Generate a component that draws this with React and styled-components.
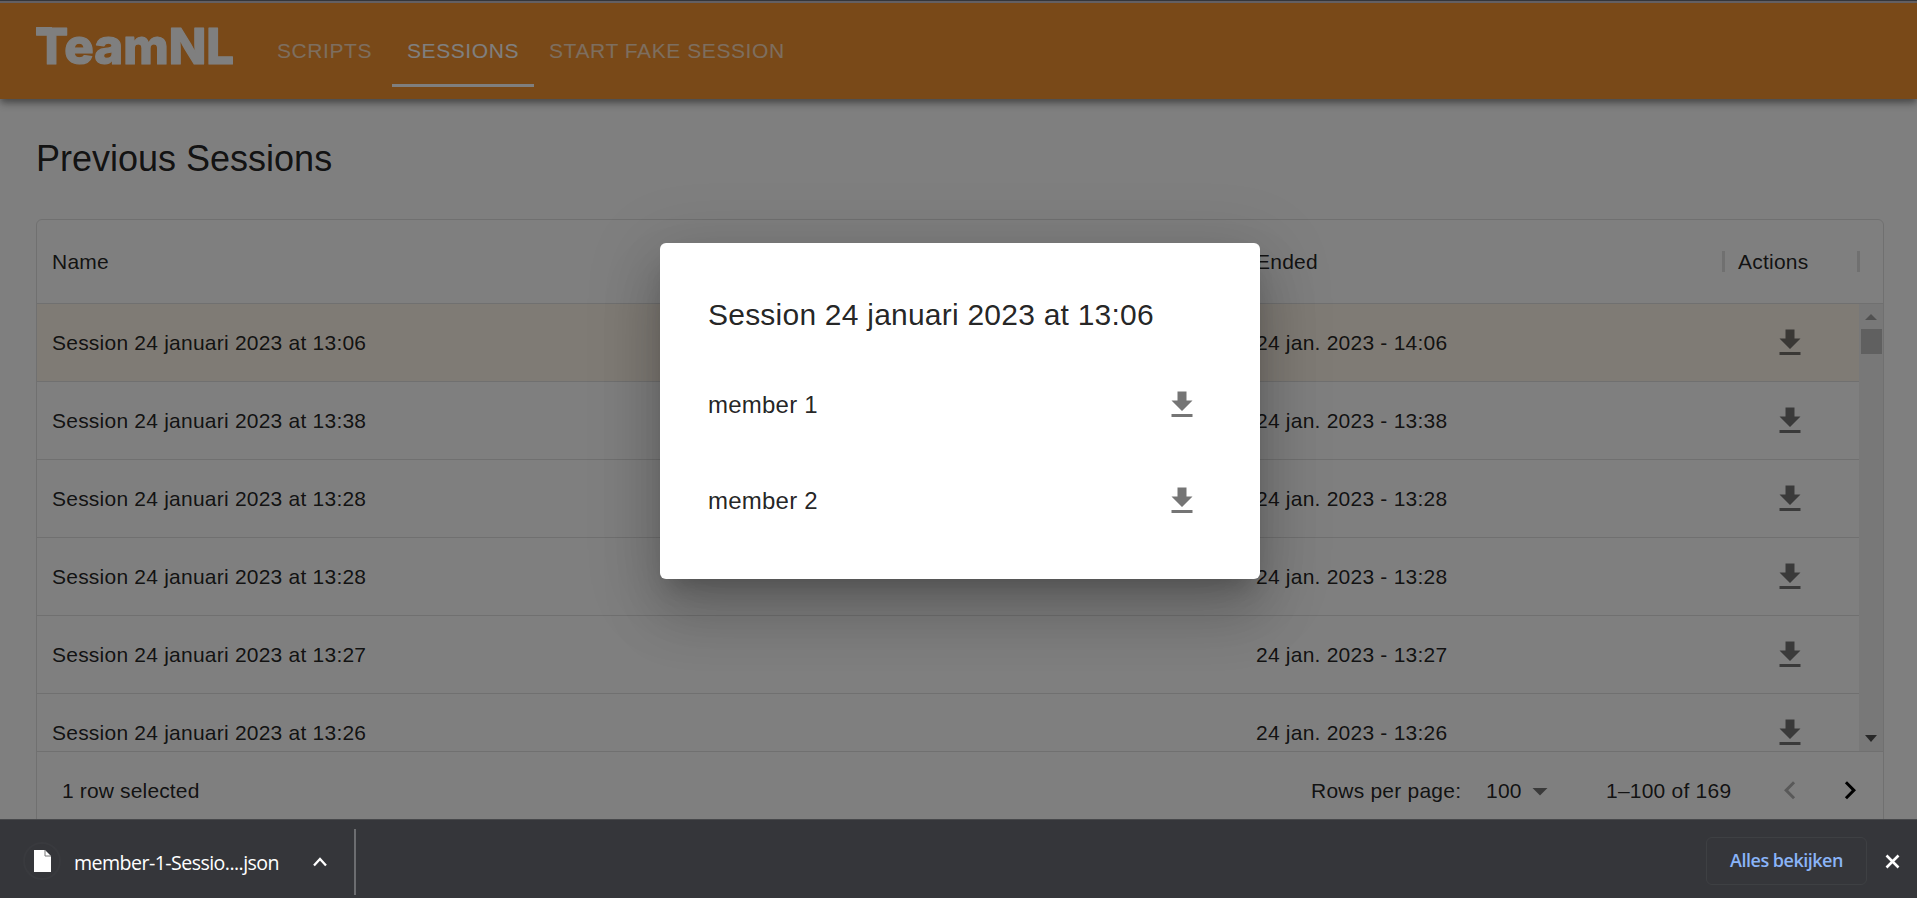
import React from "react";
import styled, { createGlobalStyle } from "styled-components";

const sessions = [
  ["Session 24 januari 2023 at 13:06", "24 jan. 2023 - 14:06"],
  ["Session 24 januari 2023 at 13:38", "24 jan. 2023 - 13:38"],
  ["Session 24 januari 2023 at 13:28", "24 jan. 2023 - 13:28"],
  ["Session 24 januari 2023 at 13:28", "24 jan. 2023 - 13:28"],
  ["Session 24 januari 2023 at 13:27", "24 jan. 2023 - 13:27"],
  ["Session 24 januari 2023 at 13:26", "24 jan. 2023 - 13:26"],
];
const members = ["member 1", "member 2"];

const GlobalStyle = createGlobalStyle`
  * { box-sizing: border-box; }
  body { margin: 0; overflow: hidden; font-family: "Liberation Sans", Arial, sans-serif; }
`;
const Window = styled.div`
  display: flex;
  flex-direction: column;
  width: 1917px;
  height: 898px;
  overflow: hidden;
`;
const BrowserEdge = styled.div`
  flex: none;
  height: 1px;
  background: #35363a;
`;
const Viewport = styled.div`
  position: relative;
  flex: 1;
  min-height: 0;
  overflow: hidden;
  background: #fff;
  color: rgba(0, 0, 0, 0.87);
`;
const AppBar = styled.header`
  display: flex;
  align-items: flex-start;
  height: 98px;
  padding-left: 36px;
  border-top: 2px solid #c6bfc4;
  background: #f39230;
  box-shadow: 0 3px 6px -1.5px rgba(0, 0, 0, 0.2), 0 6px 7.5px rgba(0, 0, 0, 0.14), 0 1.5px 15px rgba(0, 0, 0, 0.12),
    0 3px 6px rgba(0, 0, 0, 0.12);
`;
const Logo = styled.svg`
  flex: none;
  width: 200px;
  height: 72px;
  margin-top: 4px;
  margin-right: 21px;
  overflow: visible;
`;
const Tab = styled.div`
  display: flex;
  align-items: center;
  justify-content: center;
  height: 84px;
  min-width: 135px;
  padding: 14px 15px 0;
  border-bottom: 3px solid ${(p) => (p.$active ? "#fff" : "transparent")};
  color: ${(p) => (p.$active ? "#fff" : "rgba(255,255,255,0.7)")};
  font-size: 21px;
  letter-spacing: 0.58px;
  white-space: nowrap;
`;
const PageTitle = styled.h1`
  margin: 38px 0 0 36px;
  font-size: 36px;
  font-weight: 400;
  line-height: 44px;
`;
const Grid = styled.section`
  display: flex;
  flex-direction: column;
  width: 1848px;
  height: 620px;
  margin: 38px 0 0 36px;
  border: 1px solid #e0e0e0;
  border-radius: 6px;
  font-size: 21px;
  letter-spacing: 0.225px;
`;
const HeadRow = styled.div`
  display: flex;
  flex: none;
  align-items: center;
  height: 84px;
  border-bottom: 1px solid #e0e0e0;
`;
const NameCell = styled.div`
  width: 1204px;
  padding-left: 15px;
`;
const EndedCell = styled.div`
  width: 466px;
  padding-left: 15px;
`;
const ActionsCell = styled.div`
  display: flex;
  width: 152px;
  padding-left: 65px;
`;
const Separator = styled.i`
  width: 3px;
  height: 21px;
  background: #e0e0e0;
`;
const HeadActions = styled.div`
  display: flex;
  align-items: center;
  width: 139px;
  margin-left: 15px;
`;
const HeadLabel = styled.span`
  width: 132px;
  padding-left: 13px;
`;
const Body = styled.div`
  display: flex;
  flex: none;
  height: 448px;
  overflow: hidden;
  border-bottom: 1px solid #e0e0e0;
`;
const Rows = styled.div`
  flex: 1;
`;
const Row = styled.div`
  display: flex;
  align-items: center;
  height: 78px;
  border-bottom: 1px solid #e0e0e0;
  background: ${(p) => (p.$selected ? "#fef6ea" : "transparent")};
`;
const Scrollbar = styled.div`
  display: flex;
  flex-direction: column;
  align-items: center;
  width: 24px;
  padding: 10px 0 9px;
  background: #f1f1f1;
`;
const Thumb = styled.div`
  width: 21px;
  height: 25px;
  margin: 9px 0 auto;
  background: #c1c1c1;
`;
const Footer = styled.footer`
  display: flex;
  align-items: center;
  height: 78px;
  padding-left: 25px;

  > * {
    flex-shrink: 0;
  }
`;
const SelectedCount = styled.span`
  width: 1249px;
  letter-spacing: 0.15px;
`;
const PerPage = styled.span`
  width: 175px;
`;
const PageSize = styled.span`
  display: flex;
  align-items: center;
  width: 120px;
  padding-bottom: 1px;
`;
const Range = styled.span`
  width: 166px;
`;
const PageArrow = styled.svg`
  width: 36px;
  height: 36px;
  margin-right: 24px;
  fill: currentColor;
  color: ${(p) => (p.$disabled ? "rgba(0,0,0,0.3)" : "#000")};
`;
const Caret = styled.svg`
  width: 36px;
  height: 36px;
  fill: rgba(0, 0, 0, 0.54);
`;
const DownloadIcon = styled.svg`
  width: 36px;
  height: 36px;
  fill: rgba(0, 0, 0, 0.54);
`;
const Backdrop = styled.div`
  position: absolute;
  inset: 0;
  display: flex;
  justify-content: center;
  align-items: flex-start;
  padding: 242px 0 0 3px;
  background: rgba(0, 0, 0, 0.5);
`;
const Dialog = styled.div`
  width: 600px;
  height: 336px;
  padding: 48px;
  border-radius: 6px;
  background: #fff;
  box-shadow: 0 16px 22px -10px rgba(0, 0, 0, 0.2), 0 36px 57px 4px rgba(0, 0, 0, 0.14), 0 13px 69px 12px rgba(0, 0, 0, 0.12);
`;
const DialogTitle = styled.h2`
  margin: 0 0 18px;
  font-size: 30px;
  font-weight: 400;
  line-height: 48px;
  letter-spacing: 0.225px;
`;
const Member = styled.div`
  display: flex;
  align-items: center;
  justify-content: space-between;
  height: 96px;
  padding-right: 12px;
  font-size: 24px;
  letter-spacing: 0.225px;
`;
const DownloadBar = styled.div`
  display: flex;
  flex: none;
  align-items: center;
  height: 79px;
  border-top: 1px solid #47484b;
  background: #35363a;
  color: #fff;
  font-family: "Open Sans", "Noto Sans", sans-serif;
`;
const FileRing = styled.div`
  display: flex;
  align-items: center;
  justify-content: center;
  width: 38px;
  height: 38px;
  margin: 4px 13px 0 23px;
  border: 2px solid #393a3e;
  border-radius: 50%;
`;
const FileName = styled.span`
  width: 239px;
  padding-top: 7px;
  font-size: 19.6px;
  letter-spacing: -0.56px;
  white-space: nowrap;
`;
const Chevron = styled.svg`
  width: 14px;
  height: 10px;
  margin-top: 5px;
`;
const BarDivider = styled.i`
  width: 2px;
  height: 66px;
  margin: 5px auto 0 27px;
  background: #6c6d70;
`;
const ShowAll = styled.button`
  width: 161px;
  height: 48px;
  margin: 4px 18px 0 0;
  padding: 0 0 3px;
  border: 1px solid #3e4043;
  border-radius: 6px;
  background: none;
  color: #8ab4f8;
  font: 600 18px "Open Sans", sans-serif;
  letter-spacing: -0.5px;
`;
const CloseIcon = styled.svg`
  width: 15px;
  height: 15px;
  margin: 5px 17px 0 0;
`;

const Download = () => (
  <DownloadIcon viewBox="0 0 24 24">
    <path d="M19 9h-4V3H9v6H5l7 7 7-7zM5 18v2h14v-2H5z" />
  </DownloadIcon>
);

export default function App() {
  return (
    <Window>
      <GlobalStyle />
      <BrowserEdge />
      <Viewport>
        <AppBar>
          <Logo viewBox="0 0 200 72">
            <path d="M0 20h16v8H8q-7-1-8-8z" fill="#fff" />
            <text x="-1" y="57" fill="#fff" stroke="#fff" strokeWidth="1.2" strokeLinejoin="round" fontFamily="Inter, sans-serif" fontWeight="800" fontSize="50" textLength="199" lengthAdjust="spacingAndGlyphs">TeamNL</text>
          </Logo>
          <Tab>SCRIPTS</Tab>
          <Tab $active>SESSIONS</Tab>
          <Tab>START FAKE SESSION</Tab>
        </AppBar>
        <PageTitle>Previous Sessions</PageTitle>
        <Grid>
          <HeadRow>
            <NameCell>Name</NameCell>
            <EndedCell>Ended</EndedCell>
            <HeadActions>
              <Separator />
              <HeadLabel>Actions</HeadLabel>
              <Separator />
            </HeadActions>
          </HeadRow>
          <Body>
            <Rows>
              {sessions.map(([name, ended], i) => (
                <Row key={i} $selected={i === 0}>
                  <NameCell>{name}</NameCell>
                  <EndedCell>{ended}</EndedCell>
                  <ActionsCell><Download /></ActionsCell>
                </Row>
              ))}
            </Rows>
            <Scrollbar>
              <svg width="12" height="6"><path d="M0 6 6 0l6 6z" fill="#a3a3a3" /></svg>
              <Thumb />
              <svg width="12" height="7"><path d="M0 0h12L6 7z" fill="#505050" /></svg>
            </Scrollbar>
          </Body>
          <Footer>
            <SelectedCount>1 row selected</SelectedCount>
            <PerPage>Rows per page:</PerPage>
            <PageSize>100<Caret viewBox="0 0 24 24"><path d="M7 10l5 5 5-5z" /></Caret></PageSize>
            <Range>1–100 of 169</Range>
            <PageArrow $disabled viewBox="0 0 24 24"><path d="M15.41 16.09l-4.58-4.59 4.58-4.59L14 5.5l-6 6 6 6z" /></PageArrow>
            <PageArrow viewBox="0 0 24 24"><path d="M8.59 16.09l4.58-4.59-4.58-4.59L10 5.5l6 6-6 6z" /></PageArrow>
          </Footer>
        </Grid>
        <Backdrop>
          <Dialog>
            <DialogTitle>Session 24 januari 2023 at 13:06</DialogTitle>
            {members.map((m) => (
              <Member key={m}>{m}<Download /></Member>
            ))}
          </Dialog>
        </Backdrop>
      </Viewport>
      <DownloadBar>
        <FileRing>
          <svg width="17" height="22"><path d="M0 0h11l6 6v16H0z" fill="#fff" /><path d="M11 0v6h6" fill="none" stroke="#777" /></svg>
        </FileRing>
        <FileName>member-1-Sessio....json</FileName>
        <Chevron viewBox="0 0 14 10"><path d="M1 8.5 7 2l6 6.5" fill="none" stroke="#fff" strokeWidth="2.3" /></Chevron>
        <BarDivider />
        <ShowAll>Alles bekijken</ShowAll>
        <CloseIcon viewBox="0 0 15 15"><path d="M1.5 1.5l12 12m0-12l-12 12" stroke="#fff" strokeWidth="2.6" /></CloseIcon>
      </DownloadBar>
    </Window>
  );
}
